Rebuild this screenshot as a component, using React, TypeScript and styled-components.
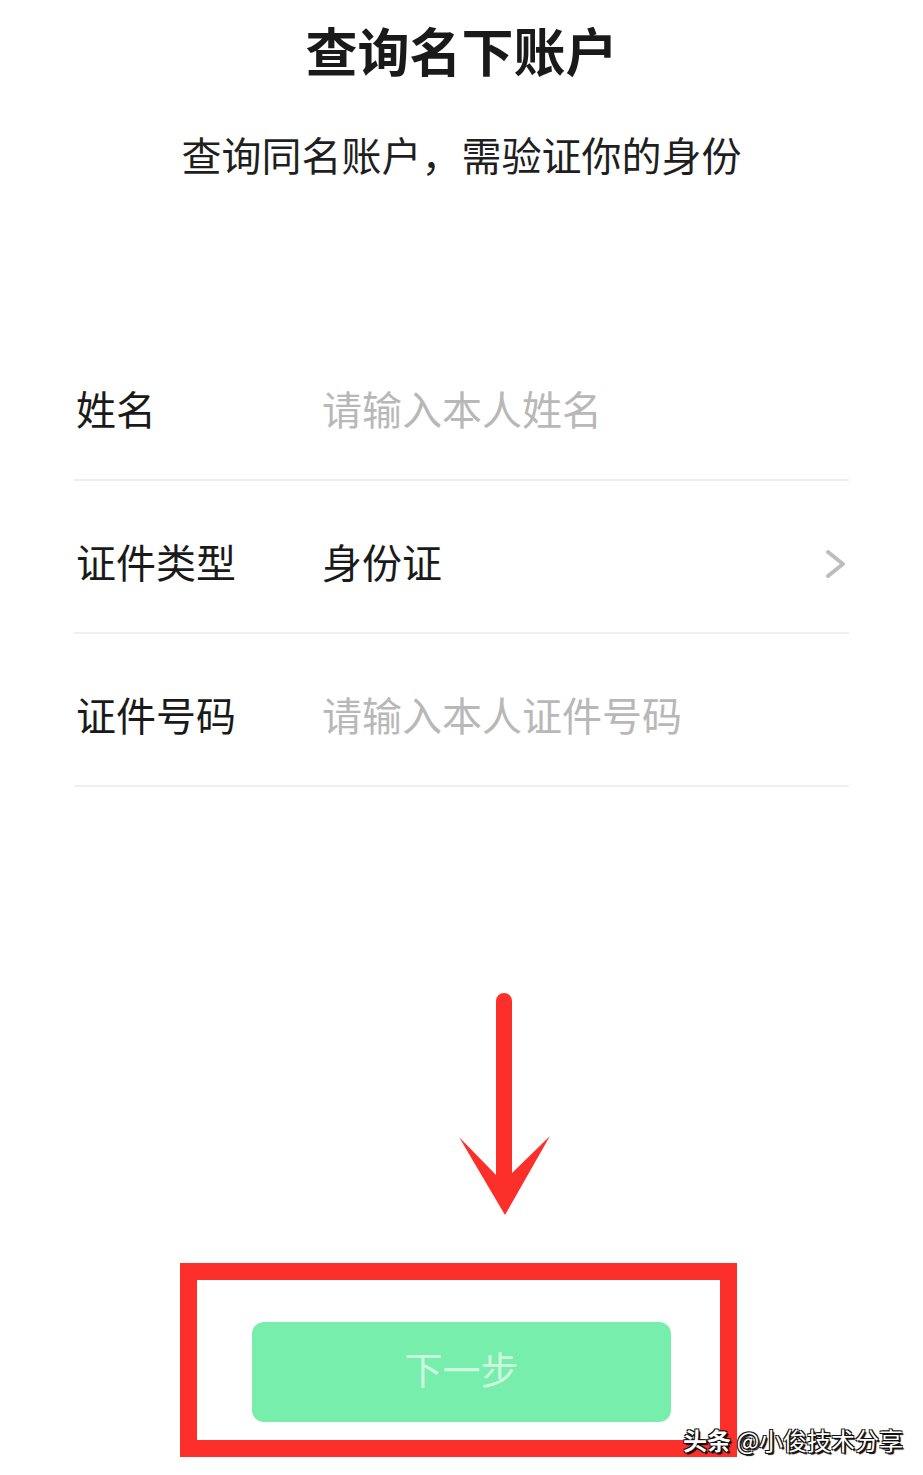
import React from "react";
import styled, { createGlobalStyle } from "styled-components";

const Global = createGlobalStyle`
  html, body { margin: 0; padding: 0; background: #ffffff; }
  body { font-family: "Noto Sans CJK SC", "Noto Sans", sans-serif; }
`;

const Page = styled.div`
  position: relative;
  width: 923px;
  height: 1475px;
  background: #fff;
  overflow: hidden;
  display: flex;
  flex-direction: column;
  align-items: center;
`;

const Title = styled.h1`
  margin: 24px 0 0;
  font-size: 52px;
  line-height: 52px;
  font-weight: 700;
  color: #1a1a1a;
  letter-spacing: 0;
`;

const Subtitle = styled.p`
  margin: 58px 0 0;
  font-size: 40px;
  line-height: 40px;
  color: #1f1f1f;
  font-weight: 400;
`;

const Form = styled.div`
  margin-top: 154px;
  width: 775px;
  display: flex;
  flex-direction: column;
`;

const Row = styled.div`
  display: flex;
  align-items: center;
  padding: 60px 0 51px;
  border-bottom: 2px solid #efefef;
`;

const Label = styled.span`
  width: 248px;
  padding-left: 2px;
  box-sizing: border-box;
  font-size: 40px;
  line-height: 40px;
  color: #1a1a1a;
`;

const Value = styled.span<{ $placeholder?: boolean }>`
  flex: 1;
  font-size: 40px;
  line-height: 40px;
  color: ${(p) => (p.$placeholder ? "#b8b8b8" : "#1a1a1a")};
`;

const Chevron = styled.svg`
  width: 22px;
  height: 30px;
  margin-right: 2px;
  margin-top: 6px;
`;

const Button = styled.button`
  margin-top: 535px;
  width: 419px;
  height: 100px;
  border: none;
  border-radius: 12px;
  background: #77eeab;
  color: #cdf8df;
  font-family: inherit;
  font-size: 38px;
  line-height: 1;
  padding: 0 0 9px;
  display: flex;
  align-items: center;
  justify-content: center;
`;

const HighlightBox = styled.div`
  position: absolute;
  left: 180px;
  top: 1263px;
  width: 557px;
  height: 194px;
  box-sizing: border-box;
  border: 17px solid #fd2f2b;
  pointer-events: none;
`;

const Arrow = styled.svg`
  position: absolute;
  left: 455px;
  top: 990px;
  width: 100px;
  height: 230px;
`;

const Watermark = styled.div`
  position: absolute;
  left: 683px;
  top: 1424px;
  font-size: 24px;
  line-height: 32px;
  color: #ffffff;
  white-space: nowrap;
  text-shadow: 1px 1px 0 #111, -1px 1px 0 #111, 1px -1px 0 #111, -1px -1px 0 #111, 2px 2px 1px #000;
`;

const WatermarkBrand = styled.span`
  font-weight: 700;
`;

export default function App() {
  return (
    <>
      <Global />
      <Page>
        <Title>查询名下账户</Title>
        <Subtitle>查询同名账户，需验证你的身份</Subtitle>
        <Form>
          <Row>
            <Label>姓名</Label>
            <Value $placeholder>请输入本人姓名</Value>
          </Row>
          <Row>
            <Label>证件类型</Label>
            <Value>身份证</Value>
            <Chevron viewBox="0 0 22 30">
              <polyline points="3,3 18,15 3,27" fill="none" stroke="#bdbdbd" strokeWidth="4" strokeLinecap="round" strokeLinejoin="round" />
            </Chevron>
          </Row>
          <Row>
            <Label>证件号码</Label>
            <Value $placeholder>请输入本人证件号码</Value>
          </Row>
        </Form>
        <Button>下一步</Button>
        <Arrow viewBox="0 0 100 230">
          <line x1="49" y1="11" x2="49" y2="190" stroke="#fd2f2b" strokeWidth="16" strokeLinecap="round" />
          <polygon points="4,147 42,186 57,183 95,146 50,225" fill="#fd2f2b" />
        </Arrow>
        <HighlightBox />
        <Watermark>
          <WatermarkBrand>头条</WatermarkBrand> @小俊技术分享
        </Watermark>
      </Page>
    </>
  );
}
